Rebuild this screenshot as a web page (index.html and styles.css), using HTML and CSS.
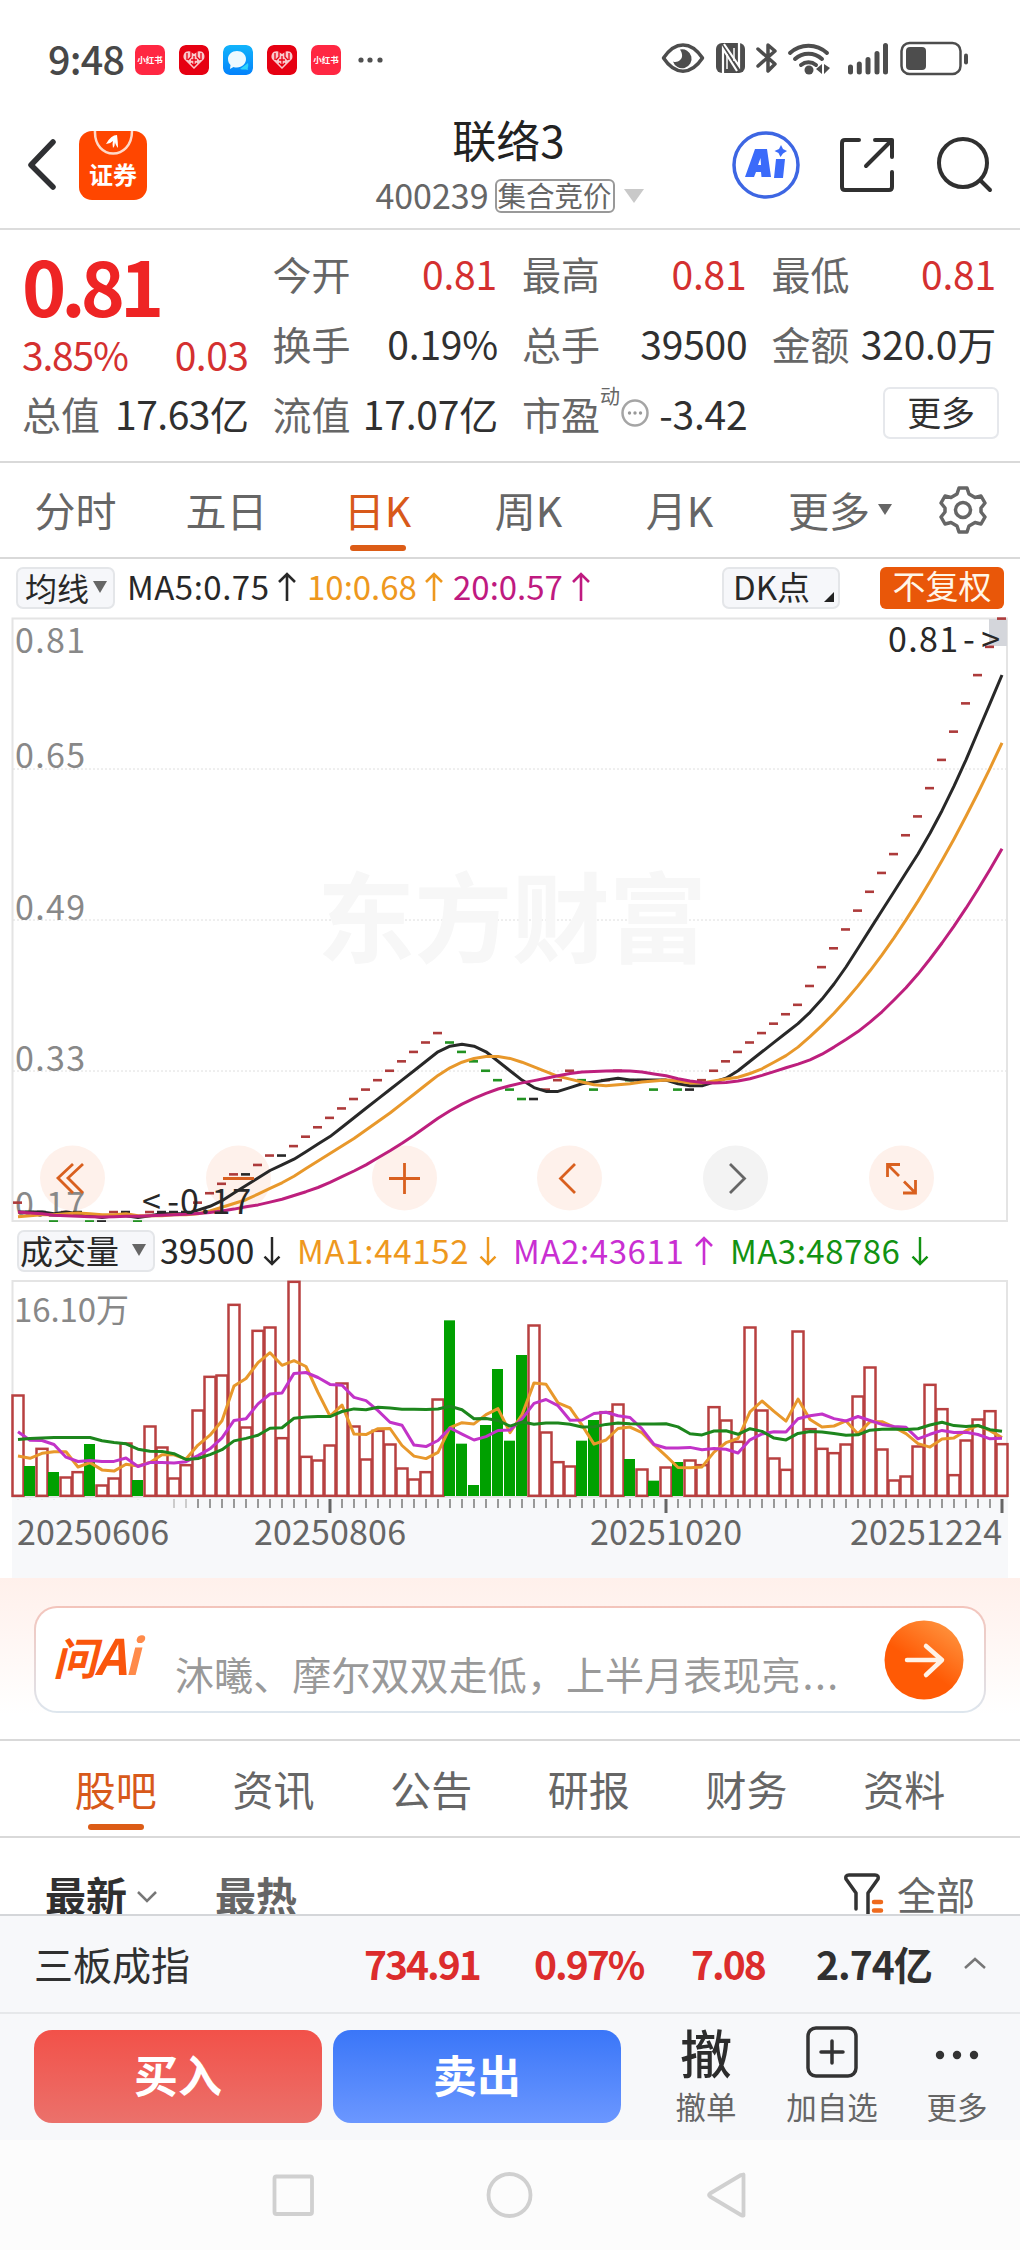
FILE: index.html
```html
<!DOCTYPE html>
<html lang="zh-CN">
<head>
<meta charset="utf-8">
<title>联络3</title>
<link rel="stylesheet" href="styles.css">
</head>
<body>
<div class="statusbar">
  <span class="time">9:48</span>
  <div class="notes">
    <span class="note note-red">小红书</span>
    <svg class="note" viewBox="0 0 30 30"><rect width="30" height="30" rx="6" fill="#e60012"/><path d="M15 24L5 14C3 9 7 5 11 6.500L15 9L19 6.500C23 5 27 9 25 14Z" fill="#f9c9cc"/><path d="M8 8v7M12 7v5l-3 3M22 8v7M18 7v5l3 3M12 15h6M15 11v10M12 18l3 3 3-3" stroke="#e60012" stroke-width="1.300" fill="none"/></svg>
    <svg class="note" viewBox="0 0 30 30"><defs><linearGradient id="msg" x2="0" y2="1"><stop stop-color="#12b4fb"/><stop offset="1" stop-color="#0482fb"/></linearGradient></defs><rect width="30" height="30" rx="6" fill="url(#msg)"/><path d="M17 24c3 1 5 0 8 1-1-2 1-3 0-7z" fill="#2fd4fb"/><path d="M14 6c5 0 9 3.500 9 8s-4 8.500-9 8.500c-1.500 0-2.500 0-3.500-.5L7 24l.5-4C6 18.500 5 16.500 5 14c0-4.500 4-8 9-8z" fill="#eef9ff"/></svg>
    <svg class="note" viewBox="0 0 30 30"><rect width="30" height="30" rx="6" fill="#e60012"/><path d="M15 24L5 14C3 9 7 5 11 6.500L15 9L19 6.500C23 5 27 9 25 14Z" fill="#f9c9cc"/><path d="M8 8v7M12 7v5l-3 3M22 8v7M18 7v5l3 3M12 15h6M15 11v10M12 18l3 3 3-3" stroke="#e60012" stroke-width="1.300" fill="none"/></svg>
    <span class="note note-red">小红书</span>
  </div>
  <svg class="more-dots" width="26" height="8" viewBox="0 0 26 8" fill="#505050"><circle cx="4" cy="4" r="2.600"/><circle cx="13" cy="4" r="2.600"/><circle cx="23" cy="4" r="2.600"/></svg>
  <svg class="signals" width="310" height="36" viewBox="0 0 310 36" fill="none" stroke="#4d4d4d">
    <path d="M2.500 17C14-0.500 30-0.500 41.500 17C30 34.500 14 34.500 2.500 17Z" stroke-width="3.500" stroke-linejoin="round"/>
    <path d="M19 8.500a9.500 9.500 0 1 1-7 12c4 2 10-2 9-7-.3-2-1-3.500-2-5z" fill="#4d4d4d" stroke="none"/>
    <rect x="55" y="2" width="29" height="30" rx="6" fill="#4d4d4d" stroke="none"/>
    <path d="M62 33V8l14 22M78 1v24L63 3" stroke="#fff" stroke-width="2.200"/><path d="M66 13v15M73 20V7" stroke="#fff" stroke-width="1.500"/>
    <path d="M97 8l17 15-7 7V4l7 6-17 15" stroke-width="3.500" stroke-linejoin="round" stroke-linecap="round"/>
    <path d="M129 12a27 27 0 0 1 37 0M134 18a20 20 0 0 1 27 0M140 24a12 12 0 0 1 15 0" stroke-width="4" stroke-linecap="round"/>
    <circle cx="148" cy="29" r="4.500" fill="#4d4d4d" stroke="none"/><path d="M155 28l6-5v10zM163 23v10l6-6z" fill="#4d4d4d" stroke="none"/>
    <path d="M189.500 26v5M198.300 23v8M207 18.500v12.500M216 12.500v18.500M224.500 4.500v26.500" stroke-width="5" stroke-linecap="round"/>
    <rect x="240.500" y="2" width="59" height="31" rx="8" stroke-width="2.500"/><rect x="245" y="6" width="20" height="23" rx="4" fill="#4d4d4d" stroke="none"/><path d="M305 14.500v7" stroke-width="4" stroke-linecap="round"/>
  </svg>
</div>

<header class="header">
  <div class="head-left">
    <svg width="30" height="52" viewBox="0 0 30 52" fill="none" stroke="#2f3033" stroke-width="5.500" stroke-linecap="round" stroke-linejoin="round"><path d="M26 3L4 26L26 48"/></svg>
    <div class="app">
      <svg width="68" height="24" viewBox="0 0 68 24"><path d="M16 0C15 30 53 30 53 0" fill="none" stroke="#ffd9c8" stroke-width="2.500"/><path d="M27 13Q32 4 38 4Q39 11 39 17Q36 13 36 11Q36 15 34 17Q33 13 34 10Q31 13 27 13Z" fill="#fff"/></svg>
      <span>证券</span>
    </div>
  </div>
  <div class="head-mid">
    <h1>联络3</h1>
    <div class="code"><span>400239</span><span class="auction">集合竞价</span><i class="tri tri-code"></i></div>
  </div>
  <div class="head-right">
    <svg width="68" height="68" viewBox="0 0 68 68"><circle cx="34" cy="34" r="32" fill="none" stroke="#3d66e3" stroke-width="3.500"/><path fill-rule="evenodd" d="M13 46L23 18H35L39 46H29.500L29 41H24L22 46ZM26 34H29L28.500 27ZM44 28H53L51 47H42ZM49 14L51 18L55 20L51 22.500L48.500 26L46.500 22L42.500 20L47 18Z" fill="#3b6bfa"/></svg>
    <svg width="56" height="56" viewBox="0 0 56 56" fill="none" stroke="#303030" stroke-width="4" stroke-linecap="round" stroke-linejoin="round"><path d="M20 3H6Q3 3 3 6V50Q3 53 6 53H50Q53 53 53 50V35M36 3H53V20M53 3L27 29"/></svg>
    <svg width="58" height="58" viewBox="0 0 58 58" fill="none" stroke="#303030" stroke-width="4" stroke-linecap="round"><circle cx="27" cy="27" r="24"/><path d="M45 45L54 54"/></svg>
  </div>
</header>

<section class="quote">
  <div class="price-col">
    <div class="price">0.81</div>
    <div class="pair change red"><span>3.85%</span><span>0.03</span></div>
    <div class="pair"><span class="lab">总值</span><span>17.63亿</span></div>
  </div>
  <div class="q-col">
    <div class="pair"><span class="lab">今开</span><span class="red inset">0.81</span></div>
    <div class="pair"><span class="lab">换手</span><span class="turnover">0.19%</span></div>
    <div class="pair"><span class="lab">流值</span><span>17.07亿</span></div>
  </div>
  <div class="q-col">
    <div class="pair"><span class="lab">最高</span><span class="red inset">0.81</span></div>
    <div class="pair"><span class="lab">总手</span><span>39500</span></div>
    <div class="pair"><span class="lab">市盈<sup>动</sup><svg class="info" width="30" height="30" viewBox="0 0 30 30"><circle cx="15" cy="15" r="12.500" fill="none" stroke="#a5a5a5" stroke-width="2.500"/><g fill="#999"><circle cx="9.500" cy="15" r="1.700"/><circle cx="15" cy="15" r="1.700"/><circle cx="20.500" cy="15" r="1.700"/></g></svg></span><span>-3.42</span></div>
  </div>
  <div class="q-col">
    <div class="pair"><span class="lab">最低</span><span class="red">0.81</span></div>
    <div class="pair"><span class="lab">金额</span><span class="amount">320.0万</span></div>
    <div class="pair pair-end"><span class="more-btn">更多</span></div>
  </div>
</section>

<nav class="period">
  <span class="tab">分时</span><span class="tab">五日</span><span class="tab on">日K</span><span class="tab">周K</span><span class="tab">月K</span>
  <span class="tab tab-more">更多<i class="tri tri-tab"></i></span>
  <svg width="48" height="50" viewBox="0 0 48 50" fill="none" stroke="#666" stroke-width="3.500" stroke-linejoin="round"><path d="M20 3H28L30 9L36 12.500L42 11L46 18L42 23V27L46 32L42 39L36 37.500L30 41L28 47H20L18 41L12 37.500L6 39L2 32L6 27V23L2 18L6 11L12 12.500L18 9Z"/><circle cx="24" cy="25" r="7.500"/></svg>
</nav>

<div class="legend ma">
  <span class="pick">均线<i class="tri"></i></span>
  <span class="val v1">MA5:0.75<svg class="arw" viewBox="0 0 18 30"><path d="M9 29V2M1 10L9 2L17 10"/></svg></span>
  <span class="val v2 orange">10:0.68<svg class="arw" viewBox="0 0 18 30"><path d="M9 29V2M1 10L9 2L17 10"/></svg></span>
  <span class="val v3 rose">20:0.57<svg class="arw" viewBox="0 0 18 30"><path d="M9 29V2M1 10L9 2L17 10"/></svg></span>
  <span class="dk">DK点<i></i></span>
  <span class="fq">不复权</span>
</div>

<svg class="chart" id="price" width="1020" height="606" viewBox="0 616 1020 606"></svg>

<div class="legend vol">
  <span class="pick">成交量<i class="tri"></i></span>
  <span class="val w0">39500<svg class="arw" viewBox="0 0 18 32"><path d="M9 1V30M1 22L9 30L17 22"/></svg></span>
  <span class="val w1 orange">MA1:44152<svg class="arw" viewBox="0 0 18 32"><path d="M9 1V30M1 22L9 30L17 22"/></svg></span>
  <span class="val w2 violet">MA2:43611<svg class="arw" viewBox="0 0 18 30"><path d="M9 29V2M1 10L9 2L17 10"/></svg></span>
  <span class="val w3 green">MA3:48786<svg class="arw" viewBox="0 0 18 32"><path d="M9 1V30M1 22L9 30L17 22"/></svg></span>
</div>

<svg class="chart" id="volume" width="1020" height="298" viewBox="0 1280 1020 298"></svg>

<section class="ask">
  <div class="ask-box">
    <div class="ask-logo"><span class="wen">问</span><span>A</span><span class="ai-i">i</span></div>
    <span class="ask-text">沐曦、摩尔双双走低，上半月表现亮<span class="dots">...</span></span>
    <svg width="80" height="80" viewBox="0 0 80 80"><defs><linearGradient id="go" x1=".2" y1="1" x2=".9" y2="0"><stop offset=".4" stop-color="#ff5a05"/><stop offset="1" stop-color="#ff9a45"/></linearGradient></defs><circle cx="40" cy="40" r="39.500" fill="url(#go)"/><path d="M23 40H58M42 26L58 40L42 55" fill="none" stroke="#fff3e8" stroke-width="4.500" stroke-linecap="round" stroke-linejoin="round"/></svg>
  </div>
</section>

<nav class="sections">
  <span class="tab on">股吧</span><span class="tab">资讯</span><span class="tab">公告</span><span class="tab">研报</span><span class="tab">财务</span><span class="tab">资料</span>
</nav>

<div class="sort">
  <span class="new">最新</span>
  <svg class="chev" width="22" height="14" viewBox="0 0 22 14"><path d="M2 2L11 11L20 2" fill="none" stroke="#777" stroke-width="2.500"/></svg>
  <span class="hot">最热</span>
  <span class="filter"><svg width="42" height="44" viewBox="0 0 42 44" fill="none" stroke="#333" stroke-width="3.500" stroke-linejoin="round" stroke-linecap="round"><path d="M13 36V20L3 6Q2 2 6 2H32Q36 2 35 6L25 20V44"/><path d="M31 29H38M31 37.500H38" stroke="#ee6a1d" stroke-width="4.500"/></svg>全部</span>
</div>

<div class="index">
  <span class="name">三板成指</span><b class="i1">734.91</b><b class="i2">0.97%</b><b class="i3">7.08</b><b class="i4">2.74亿</b>
  <svg width="24" height="14" viewBox="0 0 24 14"><path d="M2 12L12 3L22 12" fill="none" stroke="#777" stroke-width="2.500"/></svg>
</div>

<div class="actions">
  <div class="btn buy">买入</div>
  <div class="btn sell">卖出</div>
  <div class="act a1"><span class="glyph">撤</span><span>撤单</span></div>
  <div class="act a2"><svg width="52" height="52" viewBox="0 0 52 52" fill="none" stroke="#333" stroke-width="3.500" stroke-linecap="round"><rect x="2" y="2" width="48" height="48" rx="8"/><path d="M15 26H37M26 15V37"/></svg><span>加自选</span></div>
  <div class="act a3"><svg width="52" height="52" viewBox="0 0 52 52" fill="#333"><circle cx="9" cy="29" r="4.200"/><circle cx="26" cy="29" r="4.200"/><circle cx="43" cy="29" r="4.200"/></svg><span>更多</span></div>
</div>

<div class="sysnav">
  <svg width="480" height="50" viewBox="270 2170 480 50" fill="none" stroke="#d0d0d0" stroke-width="3.800" stroke-linejoin="round"><rect x="274.500" y="2176.500" width="37.500" height="37.500" rx="2"/><circle cx="509.500" cy="2195" r="21"/><path d="M743.500 2174.500V2215.500Q742 2216 741 2215L710 2196.500Q708 2195 710 2193.500L741 2175Z"/></svg>
</div>
<script src="chart.js"></script>
</body>
</html>
```
FILE: styles.css
```css
* { box-sizing: border-box; }
body { margin: 0; width: 1020px; background: #fff; color: #303030; font-family: "Noto Sans CJK SC", sans-serif; font-size: 39px; line-height: 1; white-space: nowrap; }
svg { display: block; flex: none; }
.red { color: #d43030; }
.orange { color: #ee981e; }
.rose { color: #bf1a80; }
.violet { color: #c92fd2; }
.green { color: #129212; }
.tri { display: inline-block; width: 0; height: 0; border: 7px solid transparent; border-bottom: 0; border-top: 12px solid #666; }

.statusbar { height: 100px; display: flex; align-items: center; padding: 20px 0 0 48px; }
.time { width: 87px; font-size: 39.500px; color: #484848; font-weight: 500; letter-spacing: -.8px; padding-bottom: 5px; }
.notes { display: flex; gap: 14px; }
.note { width: 30px; height: 30px; border-radius: 7px; }
.note-red { background: #ff2742; color: #fff; font-size: 8.500px; font-weight: 700; text-align: center; line-height: 29px; }
.more-dots { margin-left: 16px; }
.signals { margin-left: auto; margin-right: 49px; margin-top: -2px; }

.header { height: 130px; border-bottom: 2px solid #dcdcdc; display: flex; justify-content: space-between; padding: 0 28px 0 27px; }
.head-left { display: flex; align-items: flex-start; gap: 22px; width: 271px; padding-top: 31px; }
.head-left > svg { margin-top: 8px; }
.app { width: 68px; height: 69px; border-radius: 13px; background: #ff4600; color: #fff; text-align: center; font: 700 24px/1 "Noto Sans CJK SC", sans-serif; }
.app span { display: block; margin-top: 7px; }
.head-mid { display: flex; flex-direction: column; align-items: center; width: 290px; }
h1 { margin: 17px 0 0; padding-right: 2px; font-size: 44px; font-weight: 400; line-height: 44px; color: #222; }
.code { display: flex; align-items: center; font-size: 34px; color: #666; margin-top: 17px; height: 36px; }
.code > span:first-child { padding-bottom: 3px; }
.auction { font-size: 28.500px; border: 2px solid #999; border-radius: 6px; height: 34px; line-height: 28px; padding: 0 1px; margin: 0 9px 0 6px; }
.tri-code { border-width: 14px 10.500px 0; border-top-color: #c9c9c9; }
.head-right { display: flex; align-items: center; gap: 39px; width: 271px; justify-content: flex-end; padding-top: 1px; }
.head-right svg:nth-child(3) { margin: 0 -2px 0 2px; }

.quote { height: 231px; display: flex; padding: 12px 24px 0 22px; gap: 24px; }
.pair { display: flex; justify-content: space-between; align-items: center; height: 62px; margin-bottom: 8px; }
.quote .pair > span:last-child { letter-spacing: -.2px; }
.price-col { width: 227px; }
.price { font-size: 75px; font-weight: 700; color: #ee2424; height: 84px; line-height: 84px; letter-spacing: -5px; padding-top: 1px; }
.price-col .pair { margin-bottom: 0; height: 62px; }
.price-col .change { height: 56px; letter-spacing: -1.200px; }
.price-col .change + .pair { height: 62px; }
.q-col { width: 226px; }
.q-col:last-child { width: 225px; }
.lab { color: #666; display: flex; align-items: center; }
.inset { padding-right: 1px; }
.quote .pair > .amount { letter-spacing: -1px; }
.quote .pair > .turnover { letter-spacing: -1.500px; }
.price-col .pair > span:last-child { letter-spacing: -.5px; }
sup { font-size: 20px; align-self: flex-start; margin-top: -8px; line-height: 20px; }
.pair-end { justify-content: flex-end; }
.more-btn { border: 2px solid #e6e8ec; border-radius: 7px; width: 116px; height: 52px; line-height: 45px; font-size: 34px; text-align: center; margin-right: -3px; }

.period { height: 98px; border-top: 2px solid #d9d9d9; border-bottom: 2px solid #d9d9d9; display: flex; align-items: center; }
.tab { font-size: 41px; color: #666; text-align: center; position: relative; height: 100%; display: flex; align-items: center; justify-content: center; }
.period .tab { width: 151px; padding-bottom: 2px; }
.period .tab-more { width: 150px; margin-left: 10px; }
.tri-tab { margin-left: 8px; border-width: 11px 7px 0; }
.tab.on { color: #d8591a; }
.tab.on::after { content: ""; position: absolute; bottom: 6px; left: 50%; width: 56px; height: 6px; margin-left: -28px; border-radius: 3px; background: #dc5c16; }
.period svg { margin-left: 24px; }

.legend { display: flex; align-items: center; font-size: 33px; color: #282828; }
.ma { height: 57px; padding-left: 16px; }
.vol { height: 58px; padding-left: 17px; }
.pick { background: #f6f7fa; border: 2px solid #e4e6e9; border-radius: 7px; height: 42px; display: flex; align-items: center; justify-content: space-between; }
.ma .pick { width: 99px; padding: 0 6px 2px 7px; font-size: 32px; }
.vol .pick { width: 138px; padding: 0 7px 2px 1px; }
.val { display: flex; justify-content: space-between; align-items: center; padding-bottom: 2px; }
.arw { width: 18px; height: 30px; fill: none; stroke: currentColor; stroke-width: 2.600px; margin-top: 1px; }
.v1 { width: 169px; margin-left: 12px; letter-spacing: .5px; }
.v2 { width: 136px; margin-left: 11px; }
.v3 { width: 137px; margin-left: 10px; }
.dk { width: 118px; height: 42px; margin-left: 132px; background: #f6f7fa; border: 2px solid #e4e6e9; border-radius: 7px; display: flex; align-items: center; padding: 0 4px 2px 9px; justify-content: space-between; }
.dk i { border: 5px solid #222; border-left-color: transparent; border-top-color: transparent; margin-top: 20px; }
.fq { width: 124px; height: 42px; line-height: 37px; margin-left: 40px; background: #e95709; color: #fff6e8; border-radius: 6px; text-align: center; }
.w0 { width: 121px; margin-left: 5px; font-size: 34px; }
.w1 { width: 200px; margin-left: 16px; letter-spacing: .7px; }
.w2 { width: 200px; margin-left: 16px; letter-spacing: .6px; }
.w3 { width: 199px; margin-left: 17px; letter-spacing: .5px; }
.chart { font-size: 34px; }
.frame { fill: none; stroke: #e4e4e4; stroke-width: 2px; }
.scale { fill: #888; }
.line { fill: none; stroke-width: 3px; stroke-linejoin: round; }

.ask { height: 161px; background: linear-gradient(#fff0eb, #fff 85%); padding: 28px 34px 0; }
.ask-box { height: 107px; border: 2px solid transparent; border-radius: 23px; background: linear-gradient(#fff, #fff) padding-box, linear-gradient(#f3c4bb, #dde6ee) border-box; display: flex; align-items: center; padding: 0 20px 0 17px; }
.ask-logo { width: 122px; font-size: 49px; font-weight: 700; font-style: italic; color: #fa560c; letter-spacing: -2px; padding-bottom: 12px; }
.ask-logo .wen { font-size: 44px; }
.ai-i { color: #ff8a4a; }
.ask-text { color: #999; margin-top: 27px; letter-spacing: .1px; }
.dots { letter-spacing: 1.500px; margin-left: 2px; }
.ask-box > svg { margin-left: auto; }

.sections { height: 99px; border-top: 2px solid #d9d9d9; border-bottom: 2px solid #d9d9d9; display: flex; padding: 0 37px; }
.sections .tab { flex: 1; padding-bottom: 1px; }
.sort { height: 76px; overflow: hidden; display: flex; align-items: flex-start; padding: 36px 45px 0; font-size: 41px; }
.new { font-weight: 700; }
.chev { margin: 16px 57px 0 9px; }
.hot { font-weight: 700; color: #666; }
.filter { margin-left: auto; display: flex; font-size: 39px; color: #666; gap: 12px; align-items: flex-start; }
.filter svg { margin-top: -1px; }
.index { height: 98px; border-top: 2px solid #d4d6d9; background: #f7f8fa; display: flex; align-items: center; padding: 0 0 2px 34px; }
.index b { color: #dc2c2c; letter-spacing: -2px; }
.name { width: 330px; }
.i1 { width: 170px; }
.i2 { width: 157px; }
.i3 { width: 125px; }
.index .i4 { width: 147px; color: #303030; letter-spacing: -1px; }
.actions { height: 128px; border-top: 2px solid #e6e8ea; background: #f7f8fa; display: flex; padding: 15px 0 0 34px; }
.btn { width: 288px; height: 93px; margin-top: 1px; border-radius: 18px; color: #fff; font-size: 44px; font-weight: 700; line-height: 88px; text-align: center; margin-right: 11px; }
.buy { background: linear-gradient(#f25149, #eb716b); }
.sell { background: linear-gradient(#3a76f8, #6b97ff); }
.act { display: flex; flex-direction: column; align-items: center; font-size: 30.500px; color: #666; gap: 13px; margin-top: -3px; }
.glyph { font-size: 52px; color: #2c2c2c; font-weight: 500; }
.a1 { width: 62px; margin-left: 43px; }
.a2 { width: 92px; margin-left: 49px; }
.a3 { width: 62px; margin-left: 48px; }
.sysnav { height: 110px; background: #fcfcfc; padding: 30px 0 0 270px; }
```
FILE: chart.js
```javascript
const RED = '#b84040', GREEN = '#129212', DARK = '#282828';
const x = i => 18 + 12 * i;

// Average over the last n entries; `pad` holds the days before the visible range.
function average(all, pad, n) {
  const out = [];
  for (let i = pad; i < all.length; i++) {
    out.push(all.slice(i - n + 1, i + 1).reduce((a, b) => a + b, 0) / n);
  }
  return out;
}
const line = (values, y, color) =>
  `<polyline class="line" stroke="${color}" points="${values.map((v, i) => x(i) + ',' + y(v).toFixed(1)).join(' ')}"/>`;

// Closing prices in cents
const before = [20,20,20,19,19,18,18,17,17,17,17,17,17,17,17,18,18,18,17];
const close = [19,18,18,17,18,18,17,17,18,18,17,18,18,18,18,19,20,21,22,22,23,24,24,25,26,27,28,29,30,31,32,33,34,35,36,37,
  36,35,34,33,32,31,30,30,31,32,33,32,31,32,33,32,32,31,32,31,31,32,33,34,35,36,37,38,39,40,42,44,46,48,50,52,54,56,58,60,63,66,69,72,75,78,81];
const py = c => 618.5 + (81 - c) * 9.42;
const allClose = before.concat(close);

let s = '<path class="frame" d="M12.500 618.500H1007V1221H12.500Z"/>';
for (const y of [769, 920, 1071]) s += `<path d="M13 ${y}H1006" stroke="#dedede" stroke-dasharray="2 2"/>`;
s += '<text x="317" y="955" font-size="98" font-weight="700" fill="#f7f7f7" textLength="390">东方财富</text>';
s += '<rect x="989" y="619" width="18" height="27" fill="#d4d6db"/>';
[72.5, 238.5, 404.5, 569.5, 735.5, 901.5].forEach((cx, i) => {
  s += `<circle cx="${cx}" cy="1178" r="32.500" fill="${i === 4 ? '#f3f3f3' : '#fef1eb'}"/>`;
});
[['0.81', 653], ['0.65', 768], ['0.49', 920], ['0.33', 1071], ['0.17', 1217]].forEach(([t, y]) => {
  s += `<text class="scale" x="15" y="${y}" textLength="70">${t}</text>`;
});
close.forEach((c, i) => {
  const prev = i ? close[i - 1] : 18;
  const color = c > prev ? '#ad3b3b' : c < prev ? '#229222' : DARK;
  s += `<rect x="${x(i) - 5}" y="${py(c) - 1.2}" width="9" height="2.600" fill="${color}"/>`;
});
s += line(average(allClose, 19, 5), py, '#282828');
s += line(average(allClose, 19, 10), py, '#e8982b');
s += line(average(allClose, 19, 20), py, '#bd1f7d');
s += `<g fill="${DARK}"><text x="888" y="652" textLength="70">0.81</text><text x="963" y="652" textLength="37">-&gt;</text>
  <text x="142" y="1214" textLength="37">&lt;-</text><text x="180" y="1214" textLength="71">0.17</text></g>`;
s += `<g fill="none" stroke="#d9601f" stroke-width="2.800">
  <path d="M73 1164L58 1178L73 1193M83 1164L68 1178L83 1193M223 1178.500H254M389 1178.500H420M404.500 1163V1194"/>
  <path d="M575 1164L560.500 1178.500L575 1193M887.500 1177V1164.500H900M887.500 1164.500L899 1176M904 1181.500L915.500 1193M915.500 1180V1193H903"/>
  <path d="M730 1164L744.500 1178.500L730 1193" stroke="#666"/></g>`;
document.getElementById('price').innerHTML = s;

// Volume, in units of 250 lots
const volBefore = [30,100,50,57,73,156,233,154,239,368,340,153,192,437,203,125,68,47,57];
const tops = [375,588,535,606,621,605,522,645,624,519,630,468,531,624,584,420,319,315,103,471,181,171,503,34,559,570,525,339,468,567,481,522,594,627,605,387,
  151,521,645,465,297,512,255,165,486,575,588,512,450,425,402,567,597,632,591,576,570,584,410,450,514,171,420,564,598,183,476,535,548,522,378,291,537,630,618,528,343,416,614,510,447,422,521];
const vol = tops.map(t => 678 - t);
const falling = new Set([1, 3, 6, 10, 36, 37, 38, 39, 40, 41, 42, 47, 48, 51, 53, 55]);
const vy = v => 1496 - v / 3;
const allVol = volBefore.concat(vol);

let v = '<rect x="12" y="1498" width="996" height="80" fill="#f7f8fa"/><path class="frame" d="M12.500 1281H1007V1497H12.500Z"/>';
v += '<text class="scale" x="14" y="1322" font-size="33" textLength="115">16.10万</text>';
vol.forEach((h, i) => {
  if (falling.has(i)) v += `<rect x="${x(i) - 6}" y="${vy(h)}" width="11" height="${h / 3}" fill="#00a000"/>`;
  else v += `<rect x="${x(i) - 5.5}" y="${vy(h) + .5}" width="11" height="${h / 3 - .7}" fill="#fff" stroke="${RED}" stroke-width="2.500"/>`;
});
v += line(average(allVol, 19, 5), vy, '#e8982b');
v += line(average(allVol, 19, 10), vy, '#c233c8');
v += line(average(allVol, 19, 20), vy, '#1d861d');
for (let i = 0; i < 83; i++) {
  const major = i === 26 || i === 54 || i === 82;
  const color = major ? '#666' : i < 13 ? '#ebecee' : i < 15 ? '#ccc' : '#999';
  v += `<path d="M${x(i)} 1499V${major ? 1513 : i < 13 ? 1500 : 1508}" stroke="${color}" stroke-width="${major ? 3 : 2}"/>`;
}
[['20250606', 17], ['20250806', 254], ['20251020', 590], ['20251224', 850]].forEach(([t, tx]) => {
  v += `<text x="${tx}" y="1545" fill="#666" textLength="152">${t}</text>`;
});
document.getElementById('volume').innerHTML = v;
```
